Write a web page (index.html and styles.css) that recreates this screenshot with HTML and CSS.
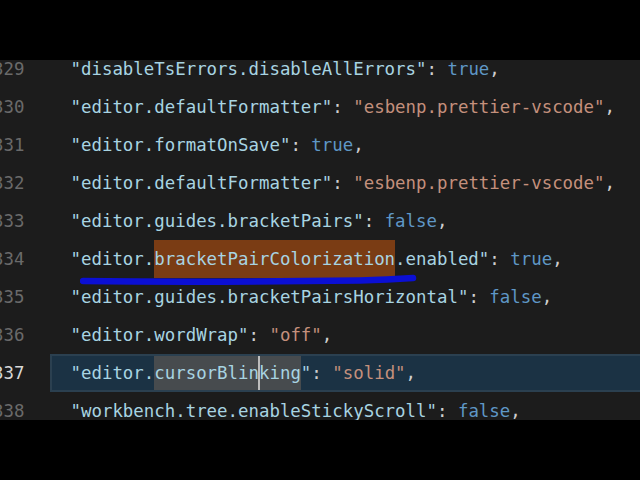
FILE: index.html
```html
<!DOCTYPE html>
<html>
<head>
<meta charset="utf-8">
<link rel="stylesheet" href="styles.css">
</head>
<body>
<div class="screen">
  <div class="editor">
    <div class="lines">
      <div class="row"><span class="ln"><span>329</span></span><span class="code"><span class="k">"disableTsErrors.disableAllErrors"</span><span class="p">: </span><span class="b">true</span><span class="p">,</span></span></div>
      <div class="row"><span class="ln"><span>330</span></span><span class="code"><span class="k">"editor.defaultFormatter"</span><span class="p">: </span><span class="s">"esbenp.prettier-vscode"</span><span class="p">,</span></span></div>
      <div class="row"><span class="ln"><span>331</span></span><span class="code"><span class="k">"editor.formatOnSave"</span><span class="p">: </span><span class="b">true</span><span class="p">,</span></span></div>
      <div class="row"><span class="ln"><span>332</span></span><span class="code"><span class="k">"editor.defaultFormatter"</span><span class="p">: </span><span class="s">"esbenp.prettier-vscode"</span><span class="p">,</span></span></div>
      <div class="row"><span class="ln"><span>333</span></span><span class="code"><span class="k">"editor.guides.bracketPairs"</span><span class="p">: </span><span class="b">false</span><span class="p">,</span></span></div>
      <div class="row mark-row"><span class="ln"><span>334</span></span><span class="code"><span class="k">"editor.<span class="find">bracketPairColorization</span>.enabled"</span><span class="p">: </span><span class="b">true</span><span class="p">,</span></span>
        <svg class="scribble" width="360" height="14" viewBox="0 0 360 14"><path d="M3 7 C 80 8, 200 7.5, 280 6.5 C 305 6, 320 5, 333 4" stroke="#0b0fd4" stroke-width="6.5" fill="none" stroke-linecap="round"/></svg>
      </div>
      <div class="row"><span class="ln"><span>335</span></span><span class="code"><span class="k">"editor.guides.bracketPairsHorizontal"</span><span class="p">: </span><span class="b">false</span><span class="p">,</span></span></div>
      <div class="row"><span class="ln"><span>336</span></span><span class="code"><span class="k">"editor.wordWrap"</span><span class="p">: </span><span class="s">"off"</span><span class="p">,</span></span></div>
      <div class="row current"><span class="ln"><span>337</span></span><span class="code"><span class="k">"editor.<span class="sel">cursorBlin<span class="cursor"></span>king</span>"</span><span class="p">: </span><span class="s">"solid"</span><span class="p">,</span></span></div>
      <div class="row"><span class="ln"><span>338</span></span><span class="code"><span class="k">"workbench.tree.enableStickyScroll"</span><span class="p">: </span><span class="b">false</span><span class="p">,</span></span></div>
    </div>
  </div>
</div>
</body>
</html>
```

FILE: styles.css
```css
html, body {
  margin: 0;
  padding: 0;
  background: #000;
}
.screen {
  width: 640px;
  height: 480px;
  padding-top: 60px;
  box-sizing: border-box;
  background: #000;
}
.editor {
  height: 360px;
  overflow: hidden;
  background: #1c1c1c;
  font-family: "DejaVu Sans Mono", monospace;
  font-size: 17.4px;
}
.lines {
  margin-top: -10px;
}
.row {
  display: flex;
  height: 38px;
  line-height: 38px;
  white-space: nowrap;
  position: relative;
}
.ln {
  width: 50px;
  flex: none;
  display: flex;
  justify-content: flex-end;
  box-sizing: border-box;
  padding-right: 25.5px;
  color: #6a6a6a;
}
.ln span {
  flex: none;
}
.code {
  flex: 1;
  padding-left: 20.5px;
  color: #a8d4e2;
}
.k { color: #a8d4e2; }
.p { color: #cfcfcf; }
.s { color: #c4907c; }
.b { color: #5f97c6; }
.find {
  display: inline-block;
  background: #7a3c14;
  line-height: 38px;
}
.scribble {
  position: absolute;
  left: 80px;
  top: 34px;
}
.current .ln { color: #d8d8d8; }
.current .code {
  background: #1b3244;
  border: 2px solid #2b4050;
  border-right: none;
  line-height: 34px;
  padding-left: 18.5px;
}
.sel {
  display: inline-block;
  background: #474b4e;
  line-height: 34px;
}
.cursor {
  display: inline-block;
  width: 2px;
  height: 34px;
  margin: 0 -1px;
  vertical-align: top;
  background: #bdbdbd;
}
```
